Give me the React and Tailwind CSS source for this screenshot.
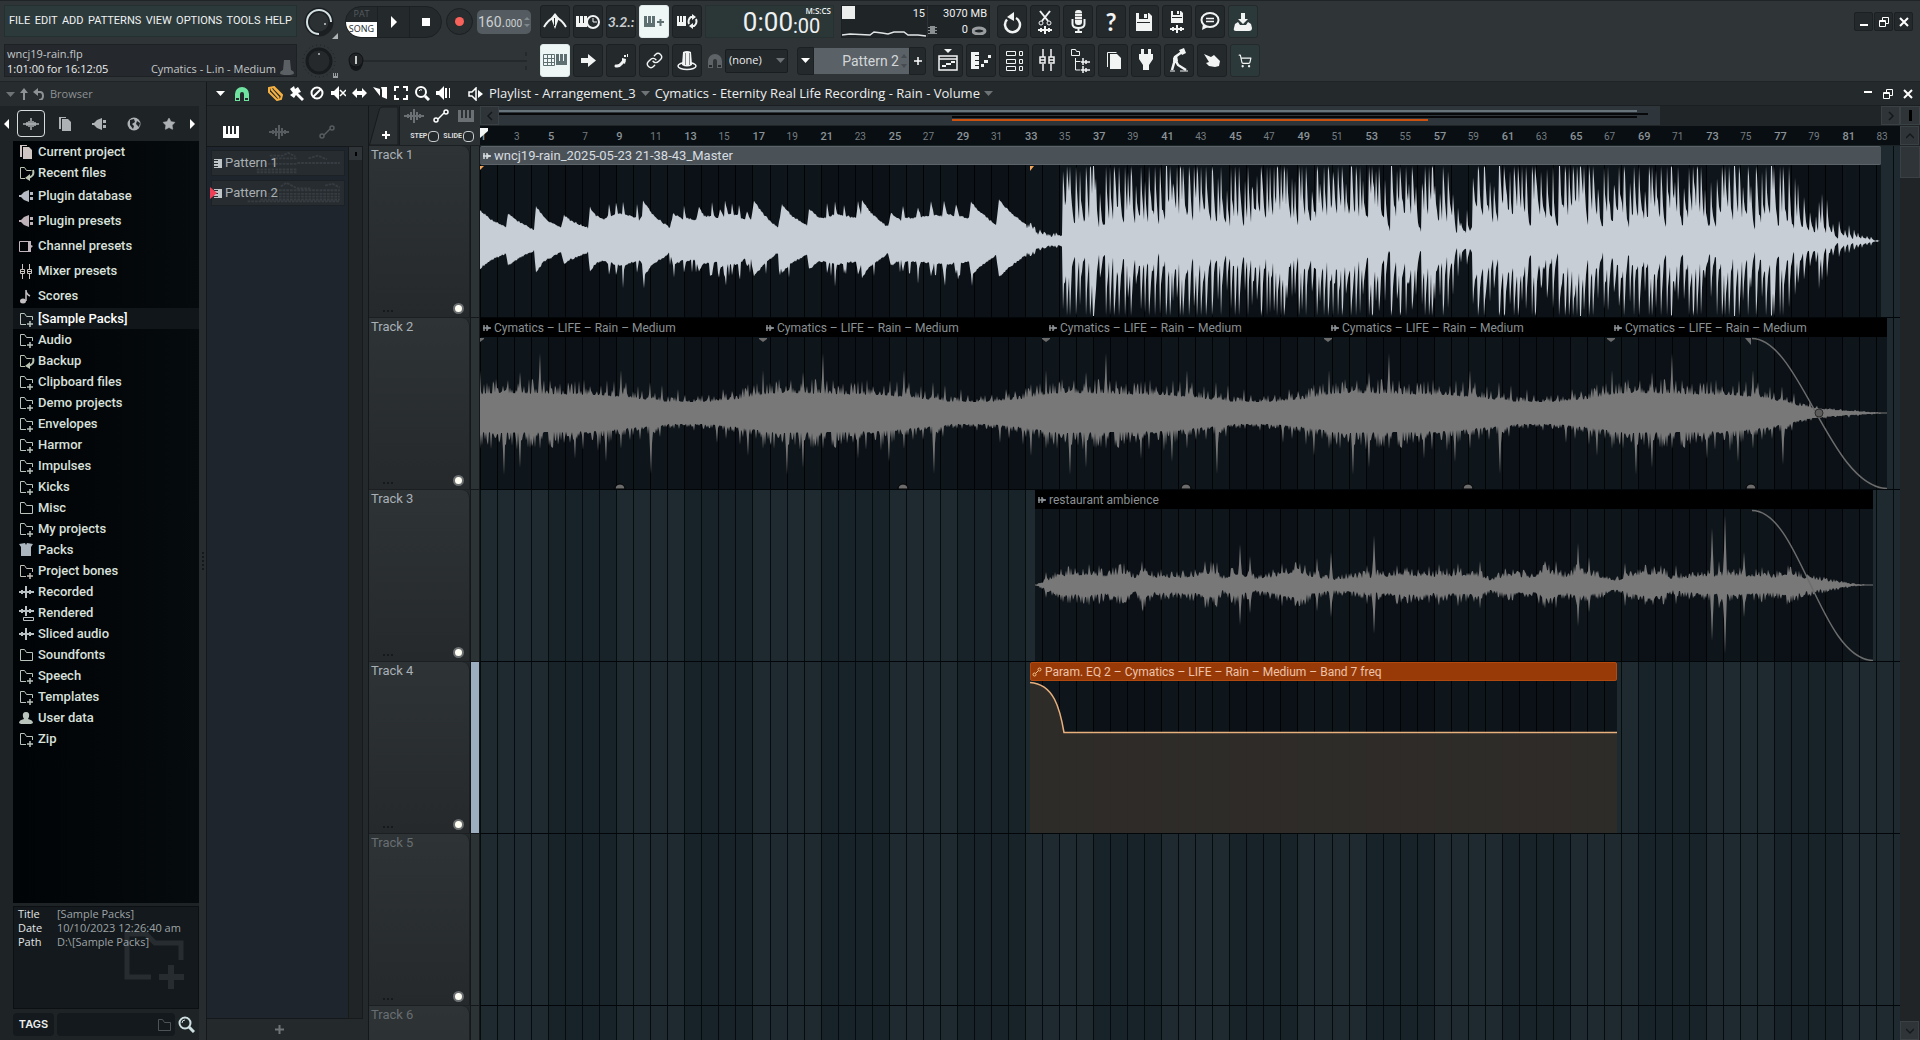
import React, { useState } from 'react'
import { Link, ShoppingCart, Star } from 'lucide-react'

const BAR = 17.03
const LANE = 1420
const pct = px => `${(px / LANE) * 100}%`

/* ---------- glyphs ---------- */

const PIANO = 'M0 0h3v7h1V0h3v7h1V0h3v11H0z'
const WAVE = 'M0 6H16M4 4v4M6 3v6M8 0v12M10 3v6M12 4v4'

const Glyph = ({ w = 16, h = 16, children, className = '' }) => (
  <svg width={w} height={h} viewBox={`0 0 ${w} ${h}`} className={`shrink-0 ${className}`} fill="none" stroke="none" aria-hidden="true">
    {children}
  </svg>
)

const PianoIcon = ({ className }) => (
  <Glyph w={16} h={12} className={className}>
    <path fill="currentColor" d="M0 0h3v8h2V0h2v8h2V0h2v8h2V0h3v12H0z" />
  </Glyph>
)

const WaveIcon = ({ className }) => (
  <Glyph w={20} h={14} className={className}>
    <path stroke="currentColor" strokeWidth="2" d="M0 7h20M4 5v4M7 3v8M10 0v14M13 3v8M16 5v4" />
  </Glyph>
)

const AutoIcon = ({ className }) => (
  <Glyph w={16} h={14} className={className}>
    <g stroke="currentColor" strokeWidth="1.5">
      <circle cx="3" cy="11" r="2" />
      <circle cx="13" cy="3" r="2" />
      <path d="M5 10l6-6" />
    </g>
  </Glyph>
)

const Caret = ({ className = '' }) => (
  <Glyph w={9} h={5} className={className}><path fill="currentColor" d="M0 0h9L4.5 5z" /></Glyph>
)

const Magnet = ({ className }) => (
  <Glyph w={14} h={14} className={className}>
    <path fill="currentColor" d="M0 14V7a7 7 0 0 1 14 0v7H9V7a2 2 0 0 0-4 0v7z" />
    <path fill="#24292c" d="M1 11h3v2H1zM10 11h3v2h-3z" />
  </Glyph>
)

const toolArt = {
  metronome: (
    <>
      <path stroke="currentColor" strokeWidth="2" d="M4 22Q8 15 13 13M26 22Q22 15 17 13" />
      <path fill="currentColor" d="M15 8l4 5-4 11-4-11z" />
      <path stroke="#24292c" d="M14.5 13v8" />
    </>
  ),
  waitInput: (
    <>
      <path fill="currentColor" transform="translate(3 11)" d={PIANO} />
      <circle cx="20" cy="17" r="6" fill="#24292c" stroke="currentColor" strokeWidth="2" />
      <path stroke="currentColor" d="M20 13v4h4" />
    </>
  ),
  overdub: (
    <>
      <path fill="currentColor" transform="translate(5 11)" d={PIANO} />
      <path stroke="currentColor" strokeWidth="2" d="M18 17h7M21.5 14v7" />
    </>
  ),
  loopRec: (
    <>
      <path fill="currentColor" transform="translate(5 11)" d="M0 0h2v6h1V0h2v6h1V0h3v10H0z" />
      <path stroke="currentColor" strokeWidth="2" d="M17 19a4 5 0 0 1 2-7h2M24 14a4 5 0 0 1-2 7h-2" />
      <path fill="currentColor" d="M20 9l4 3-4 3zM21 18l-4 3 4 3z" />
    </>
  ),
  stepPiano: (
    <>
      <path stroke="currentColor" d="M3.5 10.5h11v11h-11zM3.5 14.5h11M3.5 18.5h11M7.5 10.5v11M11.5 10.5v11" />
      <path fill="currentColor" transform="translate(16 10)" d={PIANO} />
    </>
  ),
  arrow: <path fill="currentColor" d="M8 14h7v-4l8 6.5-8 6.5v-4H8z" />,
  shoe: (
    <>
      <path stroke="currentColor" strokeWidth="3" strokeLinecap="round" d="M10 22c5 1 5-3 8-5" />
      <path fill="currentColor" d="M16 14l4 1-1 5-3-2zM18 11h2v2h-2zM21 10h1v3h-1z" />
    </>
  ),
  hat: (
    <>
      <ellipse cx="15" cy="22" rx="9" ry="3.5" stroke="currentColor" strokeWidth="1.5" />
      <path fill="currentColor" d="M11 8q4-2 8 0l1 13q-5 3-10 0z" />
      <path stroke="#7f8588" d="M13.5 9v12M17.5 9v12" />
    </>
  ),
  undo: (
    <>
      <path stroke="currentColor" strokeWidth="2.5" d="M10 14.500a7.500 7.500 0 1 0 9-1.500" />
      <path fill="currentColor" d="M17 7v9l-7-4z" />
    </>
  ),
  cutWave: (
    <>
      <path stroke="currentColor" strokeWidth="2" d="M10 6l8 10M20 6l-8 10" />
      <circle cx="11" cy="18" r="2" stroke="currentColor" /><circle cx="19" cy="18" r="2" stroke="currentColor" />
      <path stroke="currentColor" strokeWidth="2" d="M8 25h14M11 23v4M15 21v8M19 23v4" />
    </>
  ),
  mic: (
    <>
      <rect x="12" y="5" width="7" height="15" rx="3" fill="currentColor" />
      <path stroke="#777" d="M12 8.5h7M12 11.5h7M12 14.5h7" />
      <path stroke="currentColor" strokeWidth="2" d="M9.5 14v5q0 4 6 4t6-4v-5M15.5 23v4M12 27h7" />
    </>
  ),
  save: (
    <>
      <path fill="currentColor" d="M7 8h13l3 3v15H7z" />
      <path fill="#24292c" d="M10 8h9v6h-9zM8 17h13v1H8z" />
      <path fill="currentColor" d="M15 9h3v4h-3z" />
    </>
  ),
  saveWave: (
    <>
      <path fill="currentColor" d="M9 6h10l2 2v10H9z" />
      <path fill="#24292c" d="M11 6h7v4h-7z" />
      <path fill="currentColor" d="M15 6h2v3h-2z" />
      <path stroke="#24292c" d="M10 12.5h10" />
      <path stroke="currentColor" strokeWidth="2" d="M8 24h14M11 22v4M15 20v8M19 22v4" />
    </>
  ),
  comment: (
    <>
      <ellipse cx="15" cy="15" rx="8.5" ry="7" stroke="currentColor" strokeWidth="2" />
      <path fill="currentColor" d="M8 19l-1 6 6-3z" />
      <path stroke="currentColor" strokeWidth="1.5" d="M11 13.5h8M11 16.5h8" />
    </>
  ),
  download: (
    <path fill="currentColor" d="M13 8h4v6h3l-5 5-5-5h3zM7 19l3-2 2 3h6l2-3 3 2 1 4q0 3-3 3H8q-3 0-2-3z" />
  ),
  playlist: (
    <>
      <path fill="currentColor" d="M11 5h8l-4 4z" />
      <path stroke="currentColor" strokeWidth="1.5" d="M6 12h18v14H6zM6 15h18" />
      <path fill="currentColor" d="M9 21h4v2H9zM13 19h5v2h-5zM18 17h4v2h-4z" />
    </>
  ),
  pianoRoll: (
    <>
      <path fill="currentColor" d="M5 8h8v3H9v1h4v4H9v1h4v4H9v1h4v3H5z" />
      <path fill="currentColor" d="M15 20h3v3h-3zM18 16h4v3h-4zM22 11h3v3h-3z" />
    </>
  ),
  rack: (
    <path stroke="currentColor" d="M7.5 7.5h9v4h-9zM7.5 15.5h9v4h-9zM7.5 22.5h9v4h-9zM20.5 7.5h3v4h-3zM20.5 15.5h3v4h-3zM20.5 22.5h3v4h-3z" />
  ),
  mixer: (
    <path stroke="currentColor" strokeWidth="1.5" d="M11 5v8M11 20v7M19 5v8M19 20v7M8 13h5v6H8zM17 13h5v6h-5zM8 16h5M17 16h5" />
  ),
  tree: (
    <>
      <path stroke="currentColor" d="M6.5 5.5h4l1 2h3v4h-8zM10.5 14v12h5M10.5 17.5h5" />
      <path stroke="currentColor" strokeWidth="1.5" d="M16 18h9M18 14v7M21 16v4M16 26h9M18 22v7M21 24v4" />
    </>
  ),
  copy: (
    <>
      <path fill="currentColor" d="M12 10h7l4 4v11H12z" />
      <path stroke="currentColor" d="M9.5 23V8.5h9" />
    </>
  ),
  plug: (
    <path fill="currentColor" d="M10 5h3v5h4V5h3v5h2v5l-4 6v5h-6v-5l-4-6v-5h2z" />
  ),
  worker: (
    <>
      <path stroke="currentColor" strokeWidth="2.5" d="M8 26l2-7 1-6 7-5M11 15l3 6 8 5" />
      <path stroke="currentColor" d="M6 27h5M16 27h8" />
      <path fill="currentColor" d="M15 6l5-2 2 5-4 2zM9 14l4-3 1 6-4 3z" />
    </>
  ),
  hand: (
    <path fill="currentColor" d="M7 10l7 3 3-2 6 6-1 5-4 1-6-1-3-3 3-1z" />
  ),
}

const ToolIcon = ({ name }) => {
  if (name === 'link') return <Link size={17} strokeWidth={2} />
  if (name === 'cart') return <ShoppingCart size={14} strokeWidth={2} />
  if (name === 'help') return <span className="font-['Lato'] text-2xl font-bold leading-none">?</span>
  if (name === 'count') return <span className="font-['Lato'] text-sm font-bold italic leading-none text-[#c8cccf]">3.2.:</span>
  return <Glyph w={30} h={33}>{toolArt[name]}</Glyph>
}

const ToolButton = ({ name, label, active, tint }) => (
  <button
    aria-label={label}
    className={`flex h-[33px] w-[30px] shrink-0 items-center justify-center rounded-[3px] border ${
      active ? 'border-[#dfe9e9] bg-[#eef6f6] text-[#5f7073]' : tint ? 'border-[#24292b] bg-[#2c393a] text-[#f2f4f4]' : 'border-[#1c2022] bg-[#24292c] text-[#f2f4f4]'
    }`}
  >
    <ToolIcon name={name} />
  </button>
)

const ToolGroup = ({ items }) => (
  <div className="flex gap-[3px]">
    {items.map(([name, label, kind]) => (
      <ToolButton key={name} name={name} label={label} active={kind === 'on'} tint={kind === 'tint'} />
    ))}
  </div>
)

/* ---------- top toolbar ---------- */

const MENU = ['FILE', 'EDIT', 'ADD', 'PATTERNS', 'VIEW', 'OPTIONS', 'TOOLS', 'HELP']

const RECORD_TOOLS = [['metronome', 'Metronome'], ['waitInput', 'Wait for input'], ['count', 'Countdown'], ['overdub', 'Overdub', 'on'], ['loopRec', 'Loop record']]
const EDIT_TOOLS = [['stepPiano', 'Typing keyboard', 'on'], ['arrow', 'Auto scroll'], ['shoe', 'Step editing'], ['link', 'Multilink'], ['hat', 'Note colour']]
const FILE_TOOLS = [['undo', 'Undo history'], ['cutWave', 'Edison'], ['mic', 'Record audio'], ['help', 'Help'], ['save', 'Save'], ['saveWave', 'Export audio'], ['comment', 'Project info'], ['download', 'Update', 'tint']]
const VIEW_TOOLS = [['playlist', 'Playlist'], ['pianoRoll', 'Piano roll'], ['rack', 'Channel rack'], ['mixer', 'Mixer'], ['tree', 'Browser'], ['copy', 'Project picker'], ['plug', 'Plugin picker'], ['worker', 'Tempo tapper'], ['hand', 'Touch controllers'], ['cart', 'Shop', 'tint']]

const WindowButtons = ({ boxed }) => {
  const cls = boxed
    ? 'flex h-[19px] w-[19px] items-center justify-center rounded-[2px] border border-[#1c2022] bg-[#24292c] text-white'
    : 'flex h-[19px] w-[19px] items-center justify-center text-white'
  return (
    <div className="flex gap-px">
      <button aria-label="Minimize" className={cls}><Glyph w={10} h={10}><path fill="currentColor" d={boxed ? 'M1 7h8v2H1z' : 'M1 2h8v2H1z'} /></Glyph></button>
      <button aria-label="Restore" className={cls}><Glyph w={10} h={10}><path stroke="currentColor" d="M.5 3.5h6v6h-6zM.5 4.5h6M3.5 3V.5h6v6H7" /></Glyph></button>
      <button aria-label="Close" className={cls}><Glyph w={10} h={10}><path stroke="currentColor" strokeWidth="2" d="M1 1l8 8M9 1L1 9" /></Glyph></button>
    </div>
  )
}

const Knobs = () => (
  <Glyph w={38} h={78}>
    <circle cx="18" cy="21" r="12" fill="#2b3033" stroke="#1b1f21" strokeWidth="5" />
    <path stroke="#d3e0e4" strokeWidth="2" d="M18 33A12 12 0 1 1 30 21" />
    <circle cx="24" cy="23" r="1" fill="#c9d0d3" />
    <path fill="#aeb4b6" d="M37 32v6h-6z" />
    <circle cx="18" cy="60" r="16" stroke="#1d2123" strokeDasharray="1 3" />
    <circle cx="18" cy="60" r="12" fill="#25292b" stroke="#181b1d" strokeWidth="3" />
    <circle cx="18" cy="53" r="1" fill="#b9bfc1" />
    <path fill="#9a9fa2" d="M32 72h1v3h1v-3h1v3h1v-3h1v5h-5z" />
  </Glyph>
)

const TopBar = () => {
  const [mode, setMode] = useState('song')
  return (
    <header className="flex h-[82px] shrink-0 items-start border-y border-[#1f2426] bg-[#2f3437] pl-1 pt-1">
      <div className="flex flex-col gap-[7px]">
        <nav className="flex h-[32px] w-[293px] items-center justify-between border border-[#24302f] bg-[#2c3a3b] px-1">
          {MENU.map(m => (
            <button key={m} className="font-['Roboto',sans-serif] text-[11px] text-[#f0f2f2]">{m}</button>
          ))}
        </nav>
        <div className="flex h-[33px] w-[293px] items-center justify-between border border-[#1d2123] bg-[#25292d] pl-0.5 pr-0.5 font-['Open_Sans','Noto_Sans',sans-serif] text-[11px] leading-[15px] text-[#c3c7c9]">
          <div>
            <div>wncj19-rain.flp</div>
            <div className="text-[#eceeee]">1:01:00 for 16:12:05</div>
          </div>
          <div className="flex items-end gap-1 self-end">
            <span>Cymatics - L.in - Medium</span>
            <Glyph w={14} h={17}><path fill="#5a6063" d="M4 1h6l1 10q3 1 3 3t-7 2-7-2 3-3z" /></Glyph>
          </div>
        </div>
      </div>

      <div className="-mt-1 ml-1"><Knobs /></div>

      <div className="ml-1.5 flex w-[195px] flex-col gap-[7px]">
        <div className="flex h-[33px] items-center">
          <div className="flex h-[32px] overflow-hidden rounded-2xl border border-[#1c2022] bg-[#24292c]">
            <div className="flex w-[31px] flex-col font-['Open_Sans',sans-serif] text-[9px]">
              <button onClick={() => setMode('pat')} className={`flex-1 ${mode === 'pat' ? 'bg-white text-[#24292c]' : 'text-[#555b5e]'}`}>PAT</button>
              <button onClick={() => setMode('song')} className={`flex-1 ${mode === 'song' ? 'bg-white text-[#24292c]' : 'text-[#555b5e]'}`}>SONG</button>
            </div>
            <button aria-label="Play" className="flex w-8 items-center justify-center border-l border-[#1c2022] text-white"><Glyph w={8} h={12}><path fill="currentColor" d="M1 0l6 6-6 6z" /></Glyph></button>
            <button aria-label="Stop" className="flex w-8 items-center justify-center border-l border-[#1c2022]"><span className="h-2 w-2 bg-white" /></button>
          </div>
          <button aria-label="Record" className="ml-1 flex h-[27px] w-[27px] items-center justify-center rounded-full border border-[#1b1f21] bg-[#282d30]">
            <span className="h-[9px] w-[9px] rounded-full bg-[#f9625a]" />
          </button>
          <button aria-label="Tempo" className="ml-1 flex h-6 w-[54px] items-center justify-center rounded-[5px] bg-[#555c61] font-['Roboto',sans-serif] text-[#ccd1d3]">
            <span className="flex items-baseline"><span className="text-sm">160.</span><span className="text-[10px]">000</span></span>
            <Glyph w={6} h={12} className="ml-0.5"><path fill="#7e878c" d="M0 4l3-3 3 3zM0 8l3 3 3-3z" /></Glyph>
          </button>
        </div>
        <div className="flex h-[33px] items-center">
          <Glyph w={184} h={33}>
            <path stroke="#24292b" strokeWidth="2" d="M16 16h166M181 7v4M181 21v4" />
            <ellipse cx="11" cy="17" rx="7" ry="9" fill="#14171a" />
            <circle cx="11" cy="15" r="7" fill="#202427" stroke="#101214" />
            <path stroke="#fff" strokeWidth="1.5" d="M11 11v8" />
          </Glyph>
        </div>
      </div>

      <div className="flex flex-col gap-[6px]">
        <div className="flex">
          <ToolGroup items={RECORD_TOOLS} />
          <div className="ml-[3px] flex h-[33px] w-[129px] justify-end overflow-hidden border border-[#263031] bg-[#2b3637] pr-0.5 font-['Roboto',sans-serif] text-[#eef1f1]">
            <span className="text-[26px] leading-[33px]">0:00</span>
            <span className="flex w-[38px] flex-col">
              <span className="text-right font-['Open_Sans',sans-serif] text-[8px] font-semibold leading-[10px]">M:S:CS</span>
              <span className="text-[20px] leading-5">:00</span>
            </span>
          </div>
          <div className="ml-[7px] flex h-[33px] w-[149px] border border-[#1c2022] bg-[#1f2427] font-['Roboto',sans-serif] text-[11px] leading-4 text-[#eef1f1]">
            <div className="flex w-[85px] flex-col justify-between">
              <div className="flex items-start justify-between pr-0.5"><span className="h-[13px] w-[13px] bg-[#eceded]" /><span>15</span></div>
              <Glyph w={84} h={8}><path stroke="#e2e5e5" strokeWidth="1.5" d="M0 6l8-1 20 1 4-3 8 1 6 1 6-2 10 0 4 3 10 0 8 1" /></Glyph>
            </div>
            <div className="flex flex-1 flex-col items-end border-l border-[#2d3336] pr-0.5">
              <span>3070 MB</span>
              <div className="flex w-full items-center justify-between">
                <Glyph w={9} h={8}><path fill="#8a8f91" d="M2 0h5v8H2zM0 1h9v1H0zM0 4h9v1H0zM0 7h9v1H0z" /></Glyph>
                <span className="flex items-center gap-1">0<Glyph w={15} h={9}><ellipse cx="7" cy="5" rx="6" ry="3" stroke="#999d9f" strokeWidth="3" /></Glyph></span>
              </div>
            </div>
          </div>
          <div className="ml-[7px]"><ToolGroup items={FILE_TOOLS} /></div>
        </div>

        <div className="flex items-center">
          <ToolGroup items={EDIT_TOOLS} />
          <Magnet className="ml-1.5 text-[#5d6366]" />
          <div className="relative ml-[3px] flex items-center">
            <select aria-label="Snap" className="h-6 w-[63px] appearance-none rounded-[2px] border border-[#1a1d1f] bg-[#24292c] pl-[3px] font-['Open_Sans',sans-serif] text-[11px] text-[#eceeee]">
              <option>(none)</option>
            </select>
            <Caret className="absolute right-[3px] text-[#6c7275]" />
          </div>
          <button aria-label="Pattern menu" className="ml-[9px] flex h-7 w-[17px] items-center justify-center rounded-l-[3px] border border-[#1c2022] bg-[#24292c] text-white"><Caret /></button>
          <button className="flex h-[26px] w-[95px] items-center justify-end gap-0.5 bg-[#5a6167] pr-0.5 font-['Roboto',sans-serif] text-sm text-[#d3d7d9]">
            Pattern 2
            <Glyph w={6} h={14}><path fill="#454b50" d="M0 4l3-4 3 4zM0 10l3 4 3-4z" /></Glyph>
          </button>
          <button aria-label="Add pattern" className="flex h-7 w-[17px] items-center justify-center rounded-r-[3px] border border-[#1c2022] bg-[#24292c] text-white">
            <Glyph w={8} h={8}><path stroke="currentColor" strokeWidth="1.5" d="M0 4h8M4 0v8" /></Glyph>
          </button>
          <div className="ml-[7px]"><ToolGroup items={VIEW_TOOLS} /></div>
        </div>
      </div>

      <div className="ml-auto mr-[7px] mt-[7px]"><WindowButtons boxed /></div>
    </header>
  )
}

/* ---------- browser ---------- */

const browserArt = {
  doc: <><path fill="currentColor" d="M4 3h6l3 3v9H4z" /><path fill="currentColor" d="M1 1h7v1H3v11H1z" /></>,
  folder: <path stroke="currentColor" d="M1.5 2.5h4l2 3h6v8h-12z" />,
  folderPlus: <><path stroke="currentColor" d="M7 13.5H1.5v-11h4l2 3h6V9" /><path stroke="currentColor" strokeWidth="1.5" d="M8 13h6M11 10v6" /></>,
  folderBack: <><path stroke="currentColor" d="M6 13.5H1.5v-11h4l2 3h5" /><path stroke="currentColor" strokeWidth="2" d="M14 5q2 7-6 8" /><path fill="currentColor" d="M11 9v7l-5-3z" /></>,
  plug: <><path fill="currentColor" d="M0 7h2l3-3 5-2v12l-5-2-3-3H0z" /><path fill="currentColor" d="M11 4h3v3h-3zM11 9h3v3h-3z" /></>,
  channel: <><path stroke="currentColor" d="M.5 3.5h9v10h-9z" /><path fill="currentColor" d="M9 3h3v4l2 1-2 2v4H9z" /></>,
  mixer: <path stroke="currentColor" d="M3.5 1v5M3.5 11v5M10.5 1v5M10.5 11v5M1.5 6.5h4v4h-4zM8.5 6.5h4v4h-4zM1 8.5h5M8 8.5h5" />,
  note: <><ellipse cx="4" cy="13" rx="3" ry="2.5" fill="currentColor" /><path stroke="currentColor" strokeWidth="1.5" d="M7 13V2q0 4 4 6" /></>,
  box: <path fill="currentColor" d="M0 2l6-1 1 2 1-2 6 1-2 3v9H2V5z" />,
  wave: <path stroke="currentColor" strokeWidth="2" d="M0 8h15M3 6v4M7 2v12M11 6v4" />,
  waveBox: <><path stroke="currentColor" strokeWidth="2" d="M0 6h15M3 4v4M7 1v10M11 4v4" /><path stroke="currentColor" d="M4.5 12.5h10v3h-10z" /></>,
  user: <path fill="currentColor" d="M7 2q4 0 3 5L9 9q5 1 5 4l-2 1H2l-2-1q0-3 5-4L4 7Q3 2 7 2z" />,
  globe: <><circle cx="7" cy="8" r="6.5" fill="currentColor" /><path fill="#1e2326" d="M3 4l4-1 1 3-3 2 2 2-1 3-3-4zM10 5l3 2-1 4-3-3z" /></>,
}

const LIBRARY = [
  ['Current project', 'doc', '#cfc6c4'],
  ['Recent files', 'folderBack', '#b9c4b2'],
  ['Plugin database', 'plug', '#b4b9c4', true],
  ['Plugin presets', 'plug', '#beb2b8', true],
  ['Channel presets', 'channel', '#c1b6bd', true],
  ['Mixer presets', 'mixer', '#c9c2be', true],
  ['Scores', 'note', '#c4bfc2', true],
  ['[Sample Packs]', 'folderPlus', '#b9c4bd'],
  ['Audio', 'folderPlus', '#b9c4bd'],
  ['Backup', 'folderBack', '#b9c4b2'],
  ['Clipboard files', 'folderPlus', '#b9c4bd'],
  ['Demo projects', 'folderPlus', '#b9c4bd'],
  ['Envelopes', 'folderPlus', '#b9c4bd'],
  ['Harmor', 'folderPlus', '#b9c4bd'],
  ['Impulses', 'folderPlus', '#b9c4bd'],
  ['Kicks', 'folderPlus', '#b9c4bd'],
  ['Misc', 'folder', '#b9c4bd'],
  ['My projects', 'folderPlus', '#b9c4bd'],
  ['Packs', 'box', '#abb6bf'],
  ['Project bones', 'folderPlus', '#c4beb9'],
  ['Recorded', 'wave', '#b9c0c4'],
  ['Rendered', 'waveBox', '#b9c0c4'],
  ['Sliced audio', 'wave', '#b9c0c4'],
  ['Soundfonts', 'folder', '#b9c4bd'],
  ['Speech', 'folderPlus', '#b9c4bd'],
  ['Templates', 'folderPlus', '#b9c4bd'],
  ['User data', 'user', '#b9c4bd'],
  ['Zip', 'folderPlus', '#b9c4bd'],
]

const Browser = () => {
  const [selected, setSelected] = useState('[Sample Packs]')
  return (
    <aside className="flex w-[199px] shrink-0 flex-col bg-[#1e2326]">
      <div className="flex h-6 shrink-0 items-center gap-1 bg-[#272c2f] pl-[6px] font-['Open_Sans',sans-serif] text-[11px] text-[#8d9294]">
        <Caret className="text-[#6e7375]" />
        <Glyph w={10} h={12}><path fill="#8d9294" d="M5 0l4 5H6v7H4V5H1z" /></Glyph>
        <Glyph w={11} h={12}><path stroke="#8d9294" strokeWidth="2" d="M3 4h4q3 0 3 4t-4 4" /><path fill="#8d9294" d="M5 0v8L0 4z" /></Glyph>
        <span className="ml-0.5">Browser</span>
      </div>
      <div className="flex h-[35px] shrink-0 items-center justify-between px-1 text-[#aeb2b4]">
        <button aria-label="Previous tab" className="text-white"><Glyph w={6} h={10}><path fill="currentColor" d="M5 0v10L0 5z" /></Glyph></button>
        <button aria-label="All" className="flex h-[27px] w-[28px] items-center justify-center rounded-[4px] border border-[#d9dcdd]"><Glyph w={16} h={12}><path stroke="currentColor" strokeWidth="1.5" d={WAVE} /></Glyph></button>
        <button aria-label="Current project" className="flex w-7 justify-center"><Glyph w={14} h={16}>{browserArt.doc}</Glyph></button>
        <button aria-label="Plugins" className="flex w-7 justify-center"><Glyph w={15} h={16}>{browserArt.plug}</Glyph></button>
        <button aria-label="Online" className="flex w-7 justify-center"><Glyph w={14} h={16}>{browserArt.globe}</Glyph></button>
        <button aria-label="Starred" className="flex w-7 justify-center"><Star size={14} fill="currentColor" strokeWidth={1} /></button>
        <button aria-label="Next tab" className="text-white"><Glyph w={6} h={10}><path fill="currentColor" d="M1 0v10l5-5z" /></Glyph></button>
      </div>
      <ul className="ml-[13px] min-h-0 flex-1 overflow-hidden bg-linear-to-r from-[#010406] to-[#060b0e]">
        {LIBRARY.map(([name, icon, color, tall]) => (
          <li key={name}>
            <button
              onClick={() => setSelected(name)}
              className={`flex w-full items-center gap-[3px] pl-1.5 font-['Roboto',sans-serif] text-[13px] font-medium text-[#d9e0dc] ${tall ? 'h-[25px]' : 'h-[21px]'} ${selected === name ? 'bg-[#101619] text-white' : ''}`}
            >
              <span style={{ color }}><Glyph w={16} h={16}>{browserArt[icon]}</Glyph></span>
              {name}
            </button>
          </li>
        ))}
      </ul>
      <div className="relative ml-[13px] mt-[3px] h-[103px] shrink-0 border border-[#0c1013] bg-[#13191d] pl-1 font-['Open_Sans',sans-serif] text-[11px] leading-[14px] text-[#9fa4a6]">
        <svg width="60" height="58" viewBox="0 0 60 58" className="absolute bottom-[18px] right-[14px]" fill="none">
          <path stroke="#272c30" strokeWidth="5" d="M27 45H3V2h19l9 9h26v17" />
          <path stroke="#272c30" strokeWidth="6" d="M35 45h25M47 33v24" />
        </svg>
        <dl className="relative grid grid-cols-[39px_1fr]">
          <dt className="text-[#e3e6e7]">Title</dt><dd>[Sample Packs]</dd>
          <dt className="text-[#e3e6e7]">Date</dt><dd>10/10/2023 12:26:40 am</dd>
          <dt className="text-[#e3e6e7]">Path</dt><dd>D:\[Sample Packs]</dd>
        </dl>
      </div>
      <div className="ml-[13px] flex h-[31px] shrink-0 items-center gap-[3px]">
        <button className="h-[23px] w-[41px] rounded-[4px] bg-[#13191d] font-['Inter',sans-serif] text-[11px] font-semibold text-[#eceeee]">TAGS</button>
        <div className="flex h-[23px] w-[118px] items-center rounded-[4px] bg-[#13191d] pr-1">
          <input aria-label="Tag search" className="min-w-0 flex-1 bg-transparent text-xs text-white outline-none" />
          <Glyph w={14} h={16} className="text-[#4d5356]">{browserArt.folder}</Glyph>
        </div>
        <button aria-label="Search" className="text-[#cfe0e2]">
          <Glyph w={17} h={17}><circle cx="7" cy="7" r="5.5" stroke="currentColor" strokeWidth="2" /><path stroke="currentColor" strokeWidth="3" d="M11 11l5 5" /><path stroke="currentColor" d="M4 7q0-3 3-3" /></Glyph>
        </button>
      </div>
    </aside>
  )
}

/* ---------- pattern picker ---------- */

const PATTERNS = [
  { name: 'Pattern 1', notes: 'M44 20h44M52 14h36M58 5h14l6-3 8 4M60 8h28M88 13h46M100 8l10-3 10 4M44 23h44' },
  { name: 'Pattern 2', notes: 'M34 22h100M48 14h86M56 17h78M70 6l6-4 12 6h14M118 5l8-2 8 4M60 10h74M48 20h86' },
]

const Picker = () => {
  const [current, setCurrent] = useState('Pattern 2')
  return (
    <section className="flex w-[156px] shrink-0 flex-col">
      <div className="flex h-10 shrink-0 items-center gap-[30px] pl-4 pt-3">
        <button aria-label="Patterns" className="text-white"><PianoIcon /></button>
        <button aria-label="Audio clips" className="text-[#565c5f]"><WaveIcon /></button>
        <button aria-label="Automation clips" className="text-[#565c5f]"><AutoIcon /></button>
      </div>
      <div className="flex min-h-0 flex-1">
        <div className="flex flex-1 flex-col gap-1 border-b border-t border-[#14181a] bg-[#1e252c] pt-[3px]">
          {PATTERNS.map(p => (
            <button
              key={p.name}
              onClick={() => setCurrent(p.name)}
              className="relative ml-1 flex h-[26px] w-[134px] items-center gap-[3px] border border-[#1c2125] bg-[#272c30] pl-[2px] font-['Roboto',sans-serif] text-[13px] text-[#a9b0b4]"
            >
              <svg viewBox="0 0 134 26" className="absolute inset-0 h-full w-full" fill="none"><path stroke="#363c41" strokeWidth="2" strokeDasharray="3 1" d={p.notes} /></svg>
              <Glyph w={8} h={9} className="relative"><path fill="#c0c5c8" d="M0 0h8v9H0V8h4V7H0V5h4V4H0V2h4V1H0z" /></Glyph>
              <span className="relative">{p.name}</span>
              {current === p.name && (
                <svg width="8" height="12" viewBox="0 0 8 12" className="absolute -left-[3px] top-1.5"><path fill="#ee3f57" d="M1 0l7 6-7 6z" /></svg>
              )}
            </button>
          ))}
        </div>
        <div className="w-[15px] border border-[#17191b] bg-[#212427]">
          <div className="flex h-[13px] items-center justify-center bg-[#2e3438]"><span className="h-1 w-0.5 bg-black" /></div>
        </div>
      </div>
      <button aria-label="Add" className="flex h-[21px] shrink-0 items-center justify-center pr-3 text-[#6e7477]">
        <Glyph w={9} h={9}><path stroke="currentColor" strokeWidth="2" d="M0 4.5h9M4.5 0v9" /></Glyph>
      </button>
    </section>
  )
}

/* ---------- waveforms ---------- */

const makeRandom = seed => () => {
  seed = (seed * 1664525 + 1013904223) % 4294967296
  return seed / 4294967296
}

// linear interpolation through [x, value] pairs
const envelope = (points, x) => {
  for (let i = 1; i < points.length; i++) {
    const [x0, v0] = points[i - 1]
    const [x1, v1] = points[i]
    if (x <= x1) return v0 + ((v1 - v0) * (x - x0)) / (x1 - x0 || 1)
  }
  return points[points.length - 1][1]
}

const outline = (top, bottom, mid) => {
  const up = top.map((v, x) => `${x} ${(mid - v).toFixed(1)}`)
  const down = bottom.map((v, x) => `${x} ${(mid + v).toFixed(1)}`).reverse()
  return `M${up.join('L')}L${down.join('L')}Z`
}

const INTRO = [
  [0, 30], [10, 21], [26, 13], [28, 27], [36, 20], [54, 10], [56, 34], [64, 22], [81, 12], [84, 25], [90, 20], [108, 12],
  [110, 33], [116, 24], [124, 21], [128, 24], [129, 37], [131, 24], [135, 26], [136, 38], [138, 26], [142, 26], [143, 39], [145, 26], [156, 22], [157, 36], [159, 20], [162, 24],
  [163, 40], [172, 26], [190, 12], [193, 26], [203, 21], [204, 35], [206, 22], [216, 20], [219, 33], [224, 24], [231, 24], [232, 38], [234, 24],
  [238, 22], [240, 31], [244, 24], [245, 40], [248, 26], [251, 26], [252, 37], [254, 25], [258, 26], [259, 36], [261, 22], [265, 20], [267, 28], [271, 20], [274, 39], [284, 25], [298, 12],
  [302, 35], [312, 24], [327, 14], [329, 31], [338, 23], [346, 22], [347, 36], [349, 24], [354, 25], [355, 38], [357, 26], [363, 24], [364, 36], [366, 24], [376, 22], [378, 38], [381, 26], [382, 40], [390, 28], [408, 13],
  [411, 27], [421, 20], [423, 34], [425, 22], [436, 22], [438, 33], [441, 23], [449, 24], [451, 39], [454, 25], [462, 24], [464, 40], [467, 26], [474, 24], [476, 36], [479, 24], [489, 22], [491, 38],
  [500, 28], [516, 15], [519, 40], [530, 28], [545, 16], [556, 9], [565, 6], [582, 4],
]

const DROP_GAIN = [[583, 1], [968, 1], [980, 0.3], [990, 0.35], [994, 1], [1270, 1], [1305, 0.8], [1335, 0.45], [1365, 0.17], [1390, 0.05], [1400, 0]]

const masterWave = () => {
  const rnd = makeRandom(7)
  const top = []
  const bottom = []
  let hit = 0
  let next = 583
  let base = 20
  for (let x = 0; x <= 1400; x++) {
    if (x < 583) {
      const v = envelope(INTRO, x)
      const j = x > 545 ? 0.7 + rnd() * 0.7 : 1
      const spike = x > 109 && x < 545 && rnd() > 0.9 ? 12 : 0
      top.push(v * j + rnd() * 2)
      bottom.push(v * j * 0.88 + rnd() * 2 + spike)
      continue
    }
    if (x >= next) {
      hit = 30 + rnd() * 72
      base = 8 + rnd() * 22
      next = x + 3 + Math.floor(rnd() * 4)
    }
    const gain = envelope(DROP_GAIN, x)
    const v = (base + hit) * gain
    top.push(Math.min(75, v * (0.85 + rnd() * 0.3)))
    bottom.push(Math.min(75, v * (0.78 + rnd() * 0.3)))
    hit *= 0.52
  }
  return outline(top, bottom, 76)
}

const RAIN_UP = { 0: 43, 4: 29, 14: 27, 28: 33, 40: 41, 53: 33, 60: 60, 64: 33, 78: 26, 95: 29, 110: 27, 127: 33, 134: 32, 141: 43, 146: 31, 158: 27, 170: 31, 182: 28, 198: 24, 243: 24, 252: 22, 260: 20, 268: 29, 274: 28, 277: 30 }
const RAIN_DOWN = { 0: 36, 8: 26, 24: 62, 40: 55, 60: 36, 75: 27, 90: 30, 95: 46, 103: 37, 118: 38, 126: 49, 141: 36, 150: 27, 160: 27, 171: 61, 180: 24, 237: 30, 246: 26, 260: 32, 268: 43, 276: 26 }

const rainWave = () => {
  const rnd = makeRandom(21)
  const body = [[0, 18], [14, 20], [60, 19], [115, 18], [150, 15], [190, 11], [225, 11], [260, 14], [283, 18]]
  const fade = [[0, 1], [1288, 1], [1308, 0.8], [1337, 0.4], [1365, 0.18], [1390, 0.06], [1407, 0]]
  const side = peaks => {
    const loop = []
    for (let x = 0; x < 283; x++) {
      const e = envelope(body, x)
      const near = Math.max(peaks[x] || 0, (peaks[x + 1] || 0) * 0.6, (peaks[x - 1] || 0) * 0.5)
      loop.push(Math.max(near, e + (rnd() ** 3) * (e - 5) * 1.2))
    }
    return Array.from({ length: 1408 }, (_, x) => Math.max(0.5, loop[x % 283] * envelope(fade, x)))
  }
  return outline(side(RAIN_UP), side(RAIN_DOWN), 76)
}

const CAFE_SPIKES = { 11: 13, 33: 19, 54: 21, 64: 20, 85: 20, 107: 24, 126: 16, 170: 24, 182: 23, 205: 41, 215: 29, 247: 22, 260: 22, 282: 27, 296: 33, 332: 20, 339: 50, 362: 20, 372: 18, 394: 19, 404: 21, 423: 22, 445: 24, 510: 24, 521: 24, 543: 42, 554: 28, 590: 22, 641: 20, 677: 57, 684: 24, 690: 70, 709: 33, 727: 18, 755: 18 }

const cafeWave = () => {
  const rnd = makeRandom(5)
  const body = [[0, 0], [10, 3], [25, 8], [50, 10], [70, 8], [90, 11], [100, 6], [108, 13], [118, 7], [140, 7], [160, 8], [178, 12], [188, 5], [200, 10], [222, 5], [240, 8], [262, 13], [275, 8], [300, 5], [330, 7], [370, 9], [400, 8], [440, 9], [456, 4], [470, 8], [500, 7], [510, 12], [530, 7], [545, 11], [565, 7], [582, 4], [600, 9], [625, 11], [638, 5], [660, 8], [700, 9], [740, 7], [755, 11], [765, 7], [780, 5], [800, 3], [815, 1], [838, 0]]
  const side = k => Array.from({ length: 839 }, (_, x) => {
    const near = Math.max(CAFE_SPIKES[x] || 0, (CAFE_SPIKES[x + 1] || 0) * 0.5, (CAFE_SPIKES[x - 1] || 0) * 0.55)
    const e = envelope(body, x)
    return Math.max(0.5, near * k, e + (rnd() ** 2) * e * 1.1)
  })
  return outline(side(1), side(0.98), 76)
}

const WAVES = { master: masterWave(), rain: rainWave(), cafe: cafeWave() }

/* ---------- playlist ---------- */

const LABELS = Array.from({ length: 42 }, (_, i) => i * 2 + 1)
const LINES = Array.from({ length: 84 }, (_, i) => Math.round(i * BAR))

const Grid = () => (
  <svg viewBox={`0 0 ${LANE} 172`} preserveAspectRatio="none" shapeRendering="crispEdges" className="absolute inset-0 h-full w-full">
    {LINES.filter((_, i) => i % 4 === 0).map((x, i) => (
      <rect key={x} x={x} y="0" width="69" height="172" fill={i % 2 ? '#182329' : '#1e2a30'} />
    ))}
    {LINES.map(x => <rect key={x} x={x} y="0" width="1" height="172" fill="#060b0e" />)}
  </svg>
)

const ClipMark = () => (
  <Glyph w={8} h={8}><path stroke="currentColor" strokeWidth="1.5" d="M1 1v6M0 4h8M4 1v6" /><path fill="currentColor" d="M4 2l4 2-4 2z" /></Glyph>
)

const CLIP_TEXT = "flex items-center gap-[3px] overflow-hidden whitespace-nowrap pl-[3px] font-['Roboto',sans-serif]"

// a clip shows the darkened grid of the lane below it
const ClipBody = ({ from, to, children }) => (
  <div className="relative h-[152px] w-full overflow-hidden bg-[#0d1419]">
    <svg viewBox={`${from} 0 ${to - from} 152`} preserveAspectRatio="none" shapeRendering="crispEdges" className="absolute inset-0 h-full w-full">
      {LINES.filter((_, i) => i % 4 === 0).map((x, i) => (
        <rect key={x} x={x} y="0" width="69" height="152" fill={i % 2 ? '#0b1117' : '#0f161b'} />
      ))}
      {LINES.map(x => <rect key={x} x={x} y="0" width="1" height="152" fill="#010305" />)}
    </svg>
    <svg viewBox={`0 0 ${to - from} 152`} preserveAspectRatio="none" className="absolute inset-0 h-full w-full" fill="none">
      {children}
    </svg>
  </div>
)

const Clip = ({ from, to, children }) => (
  <div className="absolute inset-y-0 flex flex-col" style={{ left: pct(from), width: pct(to - from) }}>{children}</div>
)

const MasterClip = () => (
  <Clip from={0} to={1401}>
    <div className={`${CLIP_TEXT} h-[19px] rounded-[2px] border-y border-[#5c6469] bg-[#4b5257] text-[13px] text-[#d7dde1]`}>
      <ClipMark />wncj19-rain_2025-05-23 21-38-43_Master
    </div>
    <ClipBody from={0} to={1401}>
      <path fill="#c8ced5" d={WAVES.master} />
      <path fill="#f3a65c" d="M0 1h4L0 5zM550 1h4l-4 5z" />
    </ClipBody>
  </Clip>
)

const RAIN_STARTS = [0, 283, 566, 848, 1131]

const RainClips = () => (
  <Clip from={0} to={1407}>
    <div className="relative h-[19px] bg-black">
      {RAIN_STARTS.map(x => (
        <div key={x} className={`${CLIP_TEXT} absolute inset-y-0 text-[12px] text-[#8a9093]`} style={{ left: `${(x / 1407) * 100}%` }}>
          <ClipMark />Cymatics – LIFE – Rain – Medium
        </div>
      ))}
    </div>
    <ClipBody from={0} to={1407}>
      <path fill="#787878" d={WAVES.rain} />
      {RAIN_STARTS.map(x => <path key={x} fill="#6c6c6c" d={`M${x - 4} 1h8v1l-4 3-4-3z`} />)}
      {RAIN_STARTS.map(x => <path key={x} fill="#6c6c6c" stroke="#000" d={`M${x + 135} 152a5 5 0 0 1 10 0z`} />)}
      <path fill="#6c6c6c" d="M1265 1h6v7z" />
      <path stroke="#6c6c6c" strokeWidth="1.5" d="M1272 1.5C1320 1.5 1350 150 1407 151.5" />
      <circle cx="1339" cy="76" r="4" fill="#5c5c5c" stroke="#2c2c2c" />
    </ClipBody>
  </Clip>
)

const CafeClip = () => (
  <Clip from={555} to={1393}>
    <div className={`${CLIP_TEXT} h-[19px] bg-black text-[12px] text-[#8a9093]`}><ClipMark />restaurant ambience</div>
    <ClipBody from={555} to={1393}>
      <path fill="#787878" d={WAVES.cafe} />
      <path stroke="#6c6c6c" strokeWidth="1.5" d="M717 1.5C765 1.5 785 150 838 151.5" />
    </ClipBody>
  </Clip>
)

const AutomationClip = () => (
  <Clip from={550} to={1137}>
    <div className={`${CLIP_TEXT} h-[19px] rounded-[2px] border border-[#b24a10] bg-[#983a08] pl-px text-[12px] text-[#eec3a8]`}>
      <Glyph w={10} h={10}><g stroke="#f5c58f"><circle cx="2.5" cy="7.5" r="1.5" /><circle cx="7.5" cy="2.5" r="1.5" /><path d="M4 6l2-2" /></g></Glyph>
      Param. EQ 2 – Cymatics – LIFE – Rain – Medium – Band 7 freq
    </div>
    <ClipBody from={550} to={1137}>
      <path fill="#322f2b" fillOpacity=".9" d="M0 1.5C24 3 30 28 34 51.5H587V152H0z" />
      <path stroke="#e8b07c" strokeWidth="1.5" d="M0 1.5C24 3 30 28 34 51.5H587" />
    </ClipBody>
  </Clip>
)

const TRACKS = [
  { name: 'Track 1', Content: MasterClip },
  { name: 'Track 2', Content: RainClips },
  { name: 'Track 3', Content: CafeClip },
  { name: 'Track 4', Content: AutomationClip, selected: true },
  { name: 'Track 5', empty: true },
  { name: 'Track 6', empty: true },
]

const Track = ({ name, Content, selected, empty }) => (
  <div className="flex h-[172px] shrink-0">
    <div className="flex w-[101px] shrink-0 flex-col justify-between rounded-tr-lg border-b border-r border-[#1b1f21] bg-linear-to-b from-[#2e3336] to-[#25292c] pb-[3px] pl-0.5 pr-[5px]">
      <span className={`font-['Roboto',sans-serif] text-[13px] leading-[18px] ${empty ? 'text-[#686e71]' : 'text-[#a8b0b5]'}`}>{name}</span>
      <div className="flex items-end justify-between pl-3">
        <Glyph w={10} h={4}><path fill="#16191b" d="M0 0h2v2H0zM4 0h2v2H4zM8 0h2v2H8z" /></Glyph>
        <button aria-label={`Mute ${name}`} className="h-[11px] w-[11px] rounded-full border-2 border-[#6b6f71] bg-[#fffef2]" />
      </div>
    </div>
    <div className={`w-[10px] shrink-0 border-x border-b border-[#14181a] ${selected ? 'bg-[#9cafc0]' : 'bg-[#2b3335]'}`} />
    <div className="relative min-w-0 flex-1 overflow-hidden border-b border-[#030608]">
      <Grid />
      {Content && <Content />}
    </div>
  </div>
)

const PLAYLIST_TOOLS = [
  ['Draw', '#f5b041', <path fill="none" stroke="currentColor" strokeWidth="2" d="M1 2l5-1 8 8-1 4-4 1-8-8zM3 3l8 9M6 2l8 8" />],
  ['Paint', '#fff', <path fill="currentColor" d="M1 3l4-3 1 3 3-2 3 5-3 1 6 6-2 2-6-6-2 3-4-3 3-2z" />],
  ['Delete', '#fff', <g fill="none" stroke="currentColor" strokeWidth="2"><circle cx="7" cy="7" r="5.5" /><path d="M3 11l8-8" /></g>],
  ['Mute', '#fff', <><path fill="currentColor" d="M0 5h3l5-5v14L3 9H0z" /><path stroke="currentColor" strokeWidth="1.5" d="M9 4l6 6M15 4l-6 6" /></>],
  ['Slip', '#fff', <path fill="currentColor" d="M0 7l5-5v3h5V2l5 5-5 5V9H5v3z" />],
  ['Slice', '#fff', <path fill="currentColor" d="M0 1l7 2v7zM8 1h6v12l-5-2V4z" />],
  ['Select', '#fff', <path fill="none" stroke="currentColor" strokeWidth="2" d="M1 5V1h4M9 1h4v4M13 9v4H9M5 13H1V9" />],
  ['Zoom', '#fff', <g fill="none" stroke="currentColor" strokeWidth="2"><circle cx="6" cy="6" r="5" /><path d="M10 10l4 4" strokeWidth="3" /><path d="M4 5q1-2 3-1" strokeWidth="1" /></g>],
  ['Playback', '#fff', <path fill="currentColor" d="M0 5h3l5-5v14L3 9H0zM9 2h2v10H9zM13 2h1v10h-1z" />],
]

const PlaylistHeader = () => (
  <div className="flex h-6 shrink-0 items-center border-b border-[#1b1f21] bg-[#24292c] pl-[9px] font-['Open_Sans','Noto_Sans',sans-serif] text-[13px] font-medium text-[#eceeee]">
    <Caret className="text-white" />
    <button aria-label="Snap" className="ml-2.5"><Magnet className="text-[#6fe3a0]" /></button>
    <div className="ml-[19px] flex gap-1.5">
      {PLAYLIST_TOOLS.map(([label, color, art]) => (
        <button key={label} aria-label={label} style={{ color }}><Glyph w={15} h={15}>{art}</Glyph></button>
      ))}
    </div>
    <Glyph w={15} h={14} className="ml-[17px]"><path stroke="#fff" strokeWidth="1.5" d="M1 5h3l4-4v12L4 9H1z" /><path fill="#fff" d="M10 3l5 4-5 4z" /></Glyph>
    <span className="ml-1.5">Playlist - Arrangement_3</span>
    <Caret className="mx-[5px] text-[#6e7375]" />
    <span>Cymatics - Eternity Real Life Recording - Rain - Volume</span>
    <Caret className="ml-1 text-[#6e7375]" />
    <div className="ml-auto mr-[3px]"><WindowButtons /></div>
  </div>
)

const ScrollButton = ({ label, d }) => (
  <button aria-label={label} className="flex h-[19px] w-[19px] shrink-0 items-center justify-center border border-[#3a4145] bg-[#2e3438]">
    <Glyph w={8} h={10}><path stroke="#14181a" strokeWidth="1.5" d={d} /></Glyph>
  </button>
)

const CHECK = 'h-[11px] w-[11px] shrink-0 appearance-none rounded-[4px] border border-[#c9cdcf] bg-[#24292c]'

const Corner = () => (
  <div className="flex h-10 w-[111px] shrink-0 border-b border-[#1b1f21] text-white">
    <button aria-label="Add track" className="relative flex w-[30px] shrink-0 items-end justify-center pb-1.5 pl-1">
      <svg viewBox="0 0 29 39" className="absolute inset-0 h-full w-full"><path fill="#2b3033" stroke="#171b1d" d="M0 39L10 3Q11 1 13 1H28.5V39z" /></svg>
      <Glyph w={8} h={8} className="relative"><path stroke="currentColor" strokeWidth="2" d="M0 4h8M4 0v8" /></Glyph>
    </button>
    <div className="flex min-w-0 flex-1 flex-col justify-between border-l border-[#171b1d] bg-[#2b3033] pb-[3px] pl-1 pr-1.5 pt-[3px]">
      <div className="flex items-center justify-between">
        <WaveIcon className="text-[#6a7073]" />
        <AutoIcon />
        <PianoIcon className="text-[#6a7073]" />
      </div>
      <div className="flex items-center justify-end gap-1 font-['Roboto',sans-serif] text-[7px] font-bold leading-[11px] text-[#d9dcdd]">
        <label className="flex items-center gap-px">STEP<input type="checkbox" className={CHECK} /></label>
        <label className="flex items-center gap-px">SLIDE<input type="checkbox" className={CHECK} /></label>
      </div>
    </div>
  </div>
)

const Playlist = () => (
  <div className="flex min-h-0 min-w-0 flex-1">
    <div className="flex min-w-0 flex-1 flex-col">
      <div className="flex shrink-0">
        <Corner />
        <div className="min-w-0 flex-1">
          <div className="flex h-5 bg-[#202528]">
            <ScrollButton label="Scroll left" d="M6 1L2 5l4 4" />
            <div className="min-w-0 flex-1">
              <div className="flex h-[19px] w-[84%] flex-col gap-px bg-[#2f363b] pt-1">
                <div className="h-0.5 w-[98%] bg-[#68747c]" />
                <div className="h-0.5 w-[99%] bg-[#060809]" />
                <div className="ml-[39%] h-0.5 w-[59%] bg-[#060809]" />
                <div className="ml-[39%] h-0.5 w-[41%] bg-[#cc5210]" />
              </div>
            </div>
            <ScrollButton label="Scroll right" d="M2 1l4 4-4 4" />
          </div>
          <div className="relative h-5 overflow-hidden border-b border-[#1b2327] bg-[#080e12] font-['Roboto',sans-serif]">
            {LABELS.map(n => (
              <span
                key={n}
                className={`absolute top-px leading-5 ${n % 4 === 1 ? 'text-[11px] font-medium text-[#8b9398]' : 'text-[10px] text-[#767d81]'}`}
                style={{ left: pct((n - 1) * BAR) }}
              >
                {n}
              </span>
            ))}
            <svg width="9" height="11" viewBox="0 0 9 11" className="absolute left-0 top-0.5"><path fill="#f4f5f5" d="M0 0h8v3L0 10z" /></svg>
          </div>
        </div>
      </div>
      <div className="min-h-0 flex-1 overflow-hidden">
        {TRACKS.map(t => <Track key={t.name} {...t} />)}
      </div>
    </div>
    <div className="flex w-5 shrink-0 flex-col gap-px bg-[#212427]">
      <button aria-label="Vertical zoom" className="flex h-[19px] items-center justify-center border border-[#3a4145] bg-[#2e3438]"><span className="h-[11px] w-[3px] bg-black" /></button>
      <ScrollButton label="Scroll up" d="M0 7l4-4 4 4" />
      <div className="h-8 border border-[#3a4145] bg-[#2e3438]" />
      <div className="mt-auto"><ScrollButton label="Scroll down" d="M0 3l4 4 4-4" /></div>
    </div>
  </div>
)

export default function App() {
  return (
    <div className="flex h-screen flex-col overflow-hidden bg-[#24292c] font-['Open_Sans','Noto_Sans',sans-serif] select-none">
      <TopBar />
      <div className="flex min-h-0 flex-1">
        <Browser />
        <div className="flex w-2 shrink-0 flex-col items-center justify-center gap-0.5 border-r border-[#14181a] bg-[#272c2f]">
          {[0, 1, 2, 3, 4].map(i => <span key={i} className="h-0.5 w-0.5 bg-[#14181a]" />)}
        </div>
        <main className="flex min-w-0 flex-1 flex-col">
          <PlaylistHeader />
          <div className="flex min-h-0 flex-1">
            <Picker />
            <div className="w-[6px] shrink-0 border-r border-[#14181a] bg-[#24292c]" />
            <Playlist />
          </div>
        </main>
      </div>
    </div>
  )
}
